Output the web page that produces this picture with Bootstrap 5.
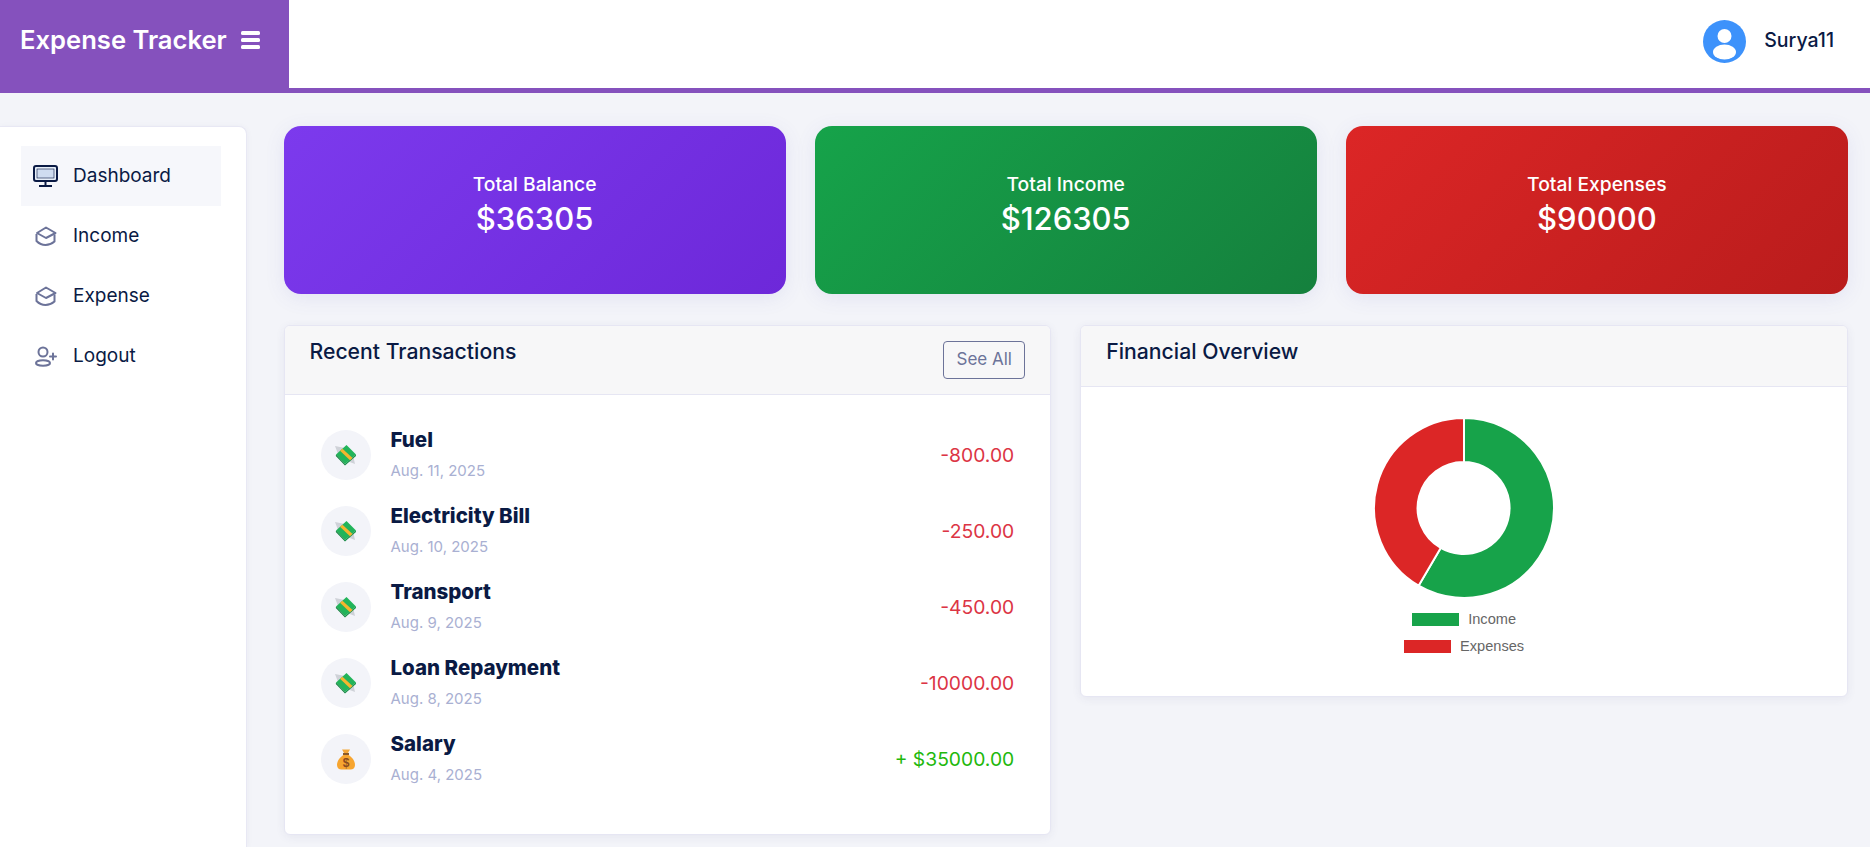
<!DOCTYPE html>
<html lang="en">
<head>
<meta charset="UTF-8">
<meta name="viewport" content="width=device-width, initial-scale=1.0">
<title>Expense Tracker</title>
<link rel="stylesheet" href="https://cdn.jsdelivr.net/npm/bootstrap@5.3.0/dist/css/bootstrap.min.css">
<style>
    body {
        background: #f3f4f9;
        font-family: "Inter", "Liberation Sans", sans-serif;
        color: #0a1a44;
        height: 847px;
        overflow: hidden;
    }
    .top-bar {
        height: 93px;
        background: #fff;
        border-bottom: 5px solid #8551bd;
        padding: 0 36px 0 0;
    }
    .brand-box {
        width: 289px;
        height: 93px;
        margin-bottom: -5px;
        background: #8551bd;
        padding: 0 0 13px 20px;
        gap: 13px;
        color: #fff;
        font-size: 25.600px;
        font-weight: 600;
    }
    .user-box { gap: 18px; padding-bottom: 6px; }
    .user-name { font-size: 19.500px; font-weight: 500; }
    .page-wrap { height: 754px; padding-top: 33px; }
    .side-menu {
        width: 247px;
        flex: none;
        background: #fff;
        border: 1px solid #e8e8f4;
        border-width: 1px 1px 0 0;
        border-radius: 0 8px 0 0;
        padding: 19px 25px 0 21px;
        box-shadow: 0 1px 6px rgba(60, 60, 120, .05);
    }
    .side-menu .nav-link {
        height: 60px;
        padding: 0 0 0 12px;
        gap: 15px;
        color: #0a1a44;
        font-size: 19px;
    }
    .side-menu .nav-link.active { background: #f6f7fb; }
    .main-area { padding: 0 22px 0 36.500px; min-width: 0; }
    .stat-row { --bs-gutter-x: 29px; --bs-gutter-y: 0; margin-bottom: 31px; }
    .stat-box {
        height: 168px;
        border-radius: 17px;
        color: #fff;
        text-align: center;
        padding-bottom: 10px;
        box-shadow: 0 4px 20px rgba(90, 90, 190, .1);
    }
    .stat-label { font-size: 19.300px; font-weight: 500; line-height: 27px; }
    .stat-value { font-size: 31px; font-weight: 500; line-height: 42px; }
    .bg-balance { background: linear-gradient(135deg, #7c3aed, #6d28d9); }
    .bg-income { background: linear-gradient(135deg, #16a34a, #15803d); }
    .bg-expense { background: linear-gradient(135deg, #dc2626, #b91c1c); }
    .panel {
        --bs-card-border-color: #e6e6f3;
        --bs-card-border-radius: 6px;
        --bs-card-inner-border-radius: 5px;
        box-shadow: 0 2px 10px rgba(60, 60, 120, .07);
    }
    .panel .card-header {
        background: #f7f7f8;
        border-bottom-color: #e6e6f3;
        padding: 9px 25px 0;
    }
    .panel-title { font-size: 21.200px; font-weight: 500; line-height: 32px; margin: 0; }
    .head-tx { height: 69px; }
    .head-chart { height: 61px; }
    .see-all {
        --bs-btn-color: #6c7399;
        --bs-btn-border-color: #6c7399;
        --bs-btn-hover-color: #fff;
        --bs-btn-hover-bg: #6c7399;
        --bs-btn-hover-border-color: #6c7399;
        width: 82px;
        height: 38px;
        padding: 0;
        margin-top: 6px;
        font-size: 17px;
        border-radius: 4px;
    }
    .tx-list { padding: 22px 36px 37px 36px; }
    .tx-row { height: 76px; }
    .tx-icon {
        width: 50px;
        height: 50px;
        flex: none;
        border-radius: 50%;
        background: #f3f4f9;
        margin-right: 20px;
    }
    .tx-text { padding-top: 2px; }
    .tx-name { font-size: 20.500px; font-weight: 800; line-height: 30px; }
    .tx-date { font-size: 15px; line-height: 32px; color: #a9b0d2; }
    .tx-amount { font-size: 19.300px; color: #dc3545; }
    .tx-amount.is-in { color: #22b80c; }
    .chart-body { height: 309px; padding-top: 31px; }
    .legend-line {
        height: 27px;
        gap: 9px;
        font-family: "Liberation Sans", sans-serif;
        font-size: 14.600px;
        color: #666;
    }
    .swatch { width: 47px; height: 13px; }
    .swatch-in { background: #17a34a; }
    .swatch-out { background: #dc2626; }
</style>
</head>
<body>

<header class="top-bar d-flex align-items-center justify-content-between">
    <div class="brand-box d-flex align-items-center">
        <span>Expense Tracker</span>
        <svg width="20" height="20" viewBox="0 0 20 20" fill="#fff">
            <rect x="1" y="1" width="19" height="4" rx="1.500"/>
            <rect x="1" y="8" width="19" height="4" rx="1.500"/>
            <rect x="1" y="15" width="19" height="4" rx="1.500"/>
        </svg>
    </div>
    <div class="user-box d-flex align-items-center">
        <svg width="43" height="43" viewBox="0 0 43 43">
            <circle cx="21.500" cy="21.500" r="21.500" fill="#3d92fb"/>
            <circle cx="21.500" cy="16" r="7" fill="#fff"/>
            <ellipse cx="21.500" cy="32" rx="11.500" ry="7.500" fill="#fff"/>
        </svg>
        <span class="user-name">Surya11</span>
    </div>
</header>

<div class="page-wrap d-flex">
    <aside class="side-menu">
        <nav class="nav flex-column">
            <a class="nav-link active d-flex align-items-center" href="#">
                <svg width="25" height="22" viewBox="0 0 25 22" fill="none">
                    <rect x="1" y="1" width="23" height="15" rx="2" fill="#e6eef8" stroke="#0a1a44" stroke-width="2"/>
                    <rect x="4" y="4" width="17" height="9" fill="#cfdcf0" stroke="#0a1a44" stroke-width=".6"/>
                    <path d="M12.500 16v4M6 21h13" stroke="#0a1a44" stroke-width="2"/>
                </svg>
                <span>Dashboard</span>
            </a>
            <a class="nav-link d-flex align-items-center" href="#">
                <svg width="25" height="22" viewBox="0 0 25 22" fill="none" stroke="#6c7399" stroke-width="2" stroke-linejoin="round">
                    <path d="M4 8 13 2.500l9.500 5.500L13 13z"/>
                    <path d="M3.500 9v7c3 3 5.500 4 9 4s6-1 9-3.500V9.500"/>
                </svg>
                <span>Income</span>
            </a>
            <a class="nav-link d-flex align-items-center" href="#">
                <svg width="25" height="22" viewBox="0 0 25 22" fill="none" stroke="#6c7399" stroke-width="2" stroke-linejoin="round">
                    <path d="M4 8 13 2.500l9.500 5.500L13 13z"/>
                    <path d="M3.500 9v7c3 3 5.500 4 9 4s6-1 9-3.500V9.500"/>
                </svg>
                <span>Expense</span>
            </a>
            <a class="nav-link d-flex align-items-center" href="#">
                <svg width="25" height="22" viewBox="0 0 25 22" fill="none" stroke="#6c7399" stroke-width="2" stroke-linecap="round">
                    <circle cx="10" cy="7" r="4.500"/>
                    <ellipse cx="10" cy="18" rx="7" ry="2.800"/>
                    <path d="M17 11.500h6M20 8.500v6"/>
                </svg>
                <span>Logout</span>
            </a>
        </nav>
    </aside>

    <main class="main-area flex-grow-1">
        <div class="row stat-row">
            <div class="col-4">
                <div class="stat-box bg-balance d-flex flex-column justify-content-center">
                    <div class="stat-label">Total Balance</div>
                    <div class="stat-value">$36305</div>
                </div>
            </div>
            <div class="col-4">
                <div class="stat-box bg-income d-flex flex-column justify-content-center">
                    <div class="stat-label">Total Income</div>
                    <div class="stat-value">$126305</div>
                </div>
            </div>
            <div class="col-4">
                <div class="stat-box bg-expense d-flex flex-column justify-content-center">
                    <div class="stat-label">Total Expenses</div>
                    <div class="stat-value">$90000</div>
                </div>
            </div>
        </div>

        <div class="row stat-row align-items-start">
            <div class="col-6">
                <div class="card panel">
                    <div class="card-header head-tx d-flex justify-content-between">
                        <h5 class="panel-title">Recent Transactions</h5>
                        <button class="btn see-all">See All</button>
                    </div>
                    <div class="tx-list" id="txList"></div>
                </div>
            </div>
            <div class="col-6">
                <div class="card panel">
                    <div class="card-header head-chart">
                        <h5 class="panel-title">Financial Overview</h5>
                    </div>
                    <div class="chart-body d-flex flex-column align-items-center">
                        <svg class="mb-2" width="180" height="180" viewBox="-90 -90 180 180" stroke="#fff" stroke-width="2">
                            <path fill="#17a34a" d="M0-90A90 90 0 1 1-45.400 77.700L-23.300 39.900A46 46 0 1 0 0-46z"/>
                            <path fill="#dc2626" d="M-45.400 77.700A90 90 0 0 1 0-90V-46A46 46 0 0 0-23.300 39.900z"/>
                        </svg>
                        <div class="legend-line d-flex align-items-center">
                            <span class="swatch swatch-in"></span>
                            <span>Income</span>
                        </div>
                        <div class="legend-line d-flex align-items-center">
                            <span class="swatch swatch-out"></span>
                            <span>Expenses</span>
                        </div>
                    </div>
                </div>
            </div>
        </div>
    </main>
</div>

<template id="billIcon">
    <svg width="24" height="24" viewBox="0 0 24 24">
        <path d="M1 3 11 5 4 11zM21 21 13 18 19 12z" fill="#cfd2d8"/>
        <path d="M2 11.500 12.500 2 22 11.500 11 21z" fill="#22b45a"/>
        <path d="M2 11.500 11 21v1.500L1.800 13z" fill="#12813d"/>
        <path d="M11 21 22 11.500V13L11 22.500z" fill="#169048"/>
        <path d="M6 7.800 8.500 5.700 18.500 15 16 17.200z" fill="#f5b52e"/>
    </svg>
</template>
<template id="bagIcon">
    <svg width="24" height="24" viewBox="0 0 24 24">
        <path d="M8 2.500h8l-2 3.500h-4z" fill="#f3a73a"/>
        <rect x="9" y="6" width="6" height="2" fill="#8a5a2b"/>
        <path d="M9.500 8h5C18 10 21 14 21 18c0 3-2 4.500-4.500 4.500h-9C5 22.500 3 21 3 18 3 14 6 10 9.500 8z" fill="#f7a530"/>
        <text x="12" y="19.500" text-anchor="middle" font-family="Liberation Sans, sans-serif" font-weight="700" font-size="12" fill="#8a4b20">$</text>
    </svg>
</template>

<script>
const transactions = [
    { name: "Fuel", date: "Aug. 11, 2025", amount: "-800.00", icon: "billIcon" },
    { name: "Electricity Bill", date: "Aug. 10, 2025", amount: "-250.00", icon: "billIcon" },
    { name: "Transport", date: "Aug. 9, 2025", amount: "-450.00", icon: "billIcon" },
    { name: "Loan Repayment", date: "Aug. 8, 2025", amount: "-10000.00", icon: "billIcon" },
    { name: "Salary", date: "Aug. 4, 2025", amount: "+ $35000.00", icon: "bagIcon", income: true }
];

const txList = document.getElementById("txList");
transactions.forEach(function (t) {
    const icon = document.getElementById(t.icon).innerHTML;
    txList.innerHTML += `
        <div class="tx-row d-flex align-items-center">
            <div class="tx-icon d-flex align-items-center justify-content-center">${icon}</div>
            <div class="tx-text flex-grow-1">
                <div class="tx-name">${t.name}</div>
                <div class="tx-date">${t.date}</div>
            </div>
            <div class="tx-amount ${t.income ? "is-in" : ""}">${t.amount}</div>
        </div>`;
});
</script>
<script src="https://cdn.jsdelivr.net/npm/bootstrap@5.3.0/dist/js/bootstrap.bundle.min.js"></script>
</body>
</html>
